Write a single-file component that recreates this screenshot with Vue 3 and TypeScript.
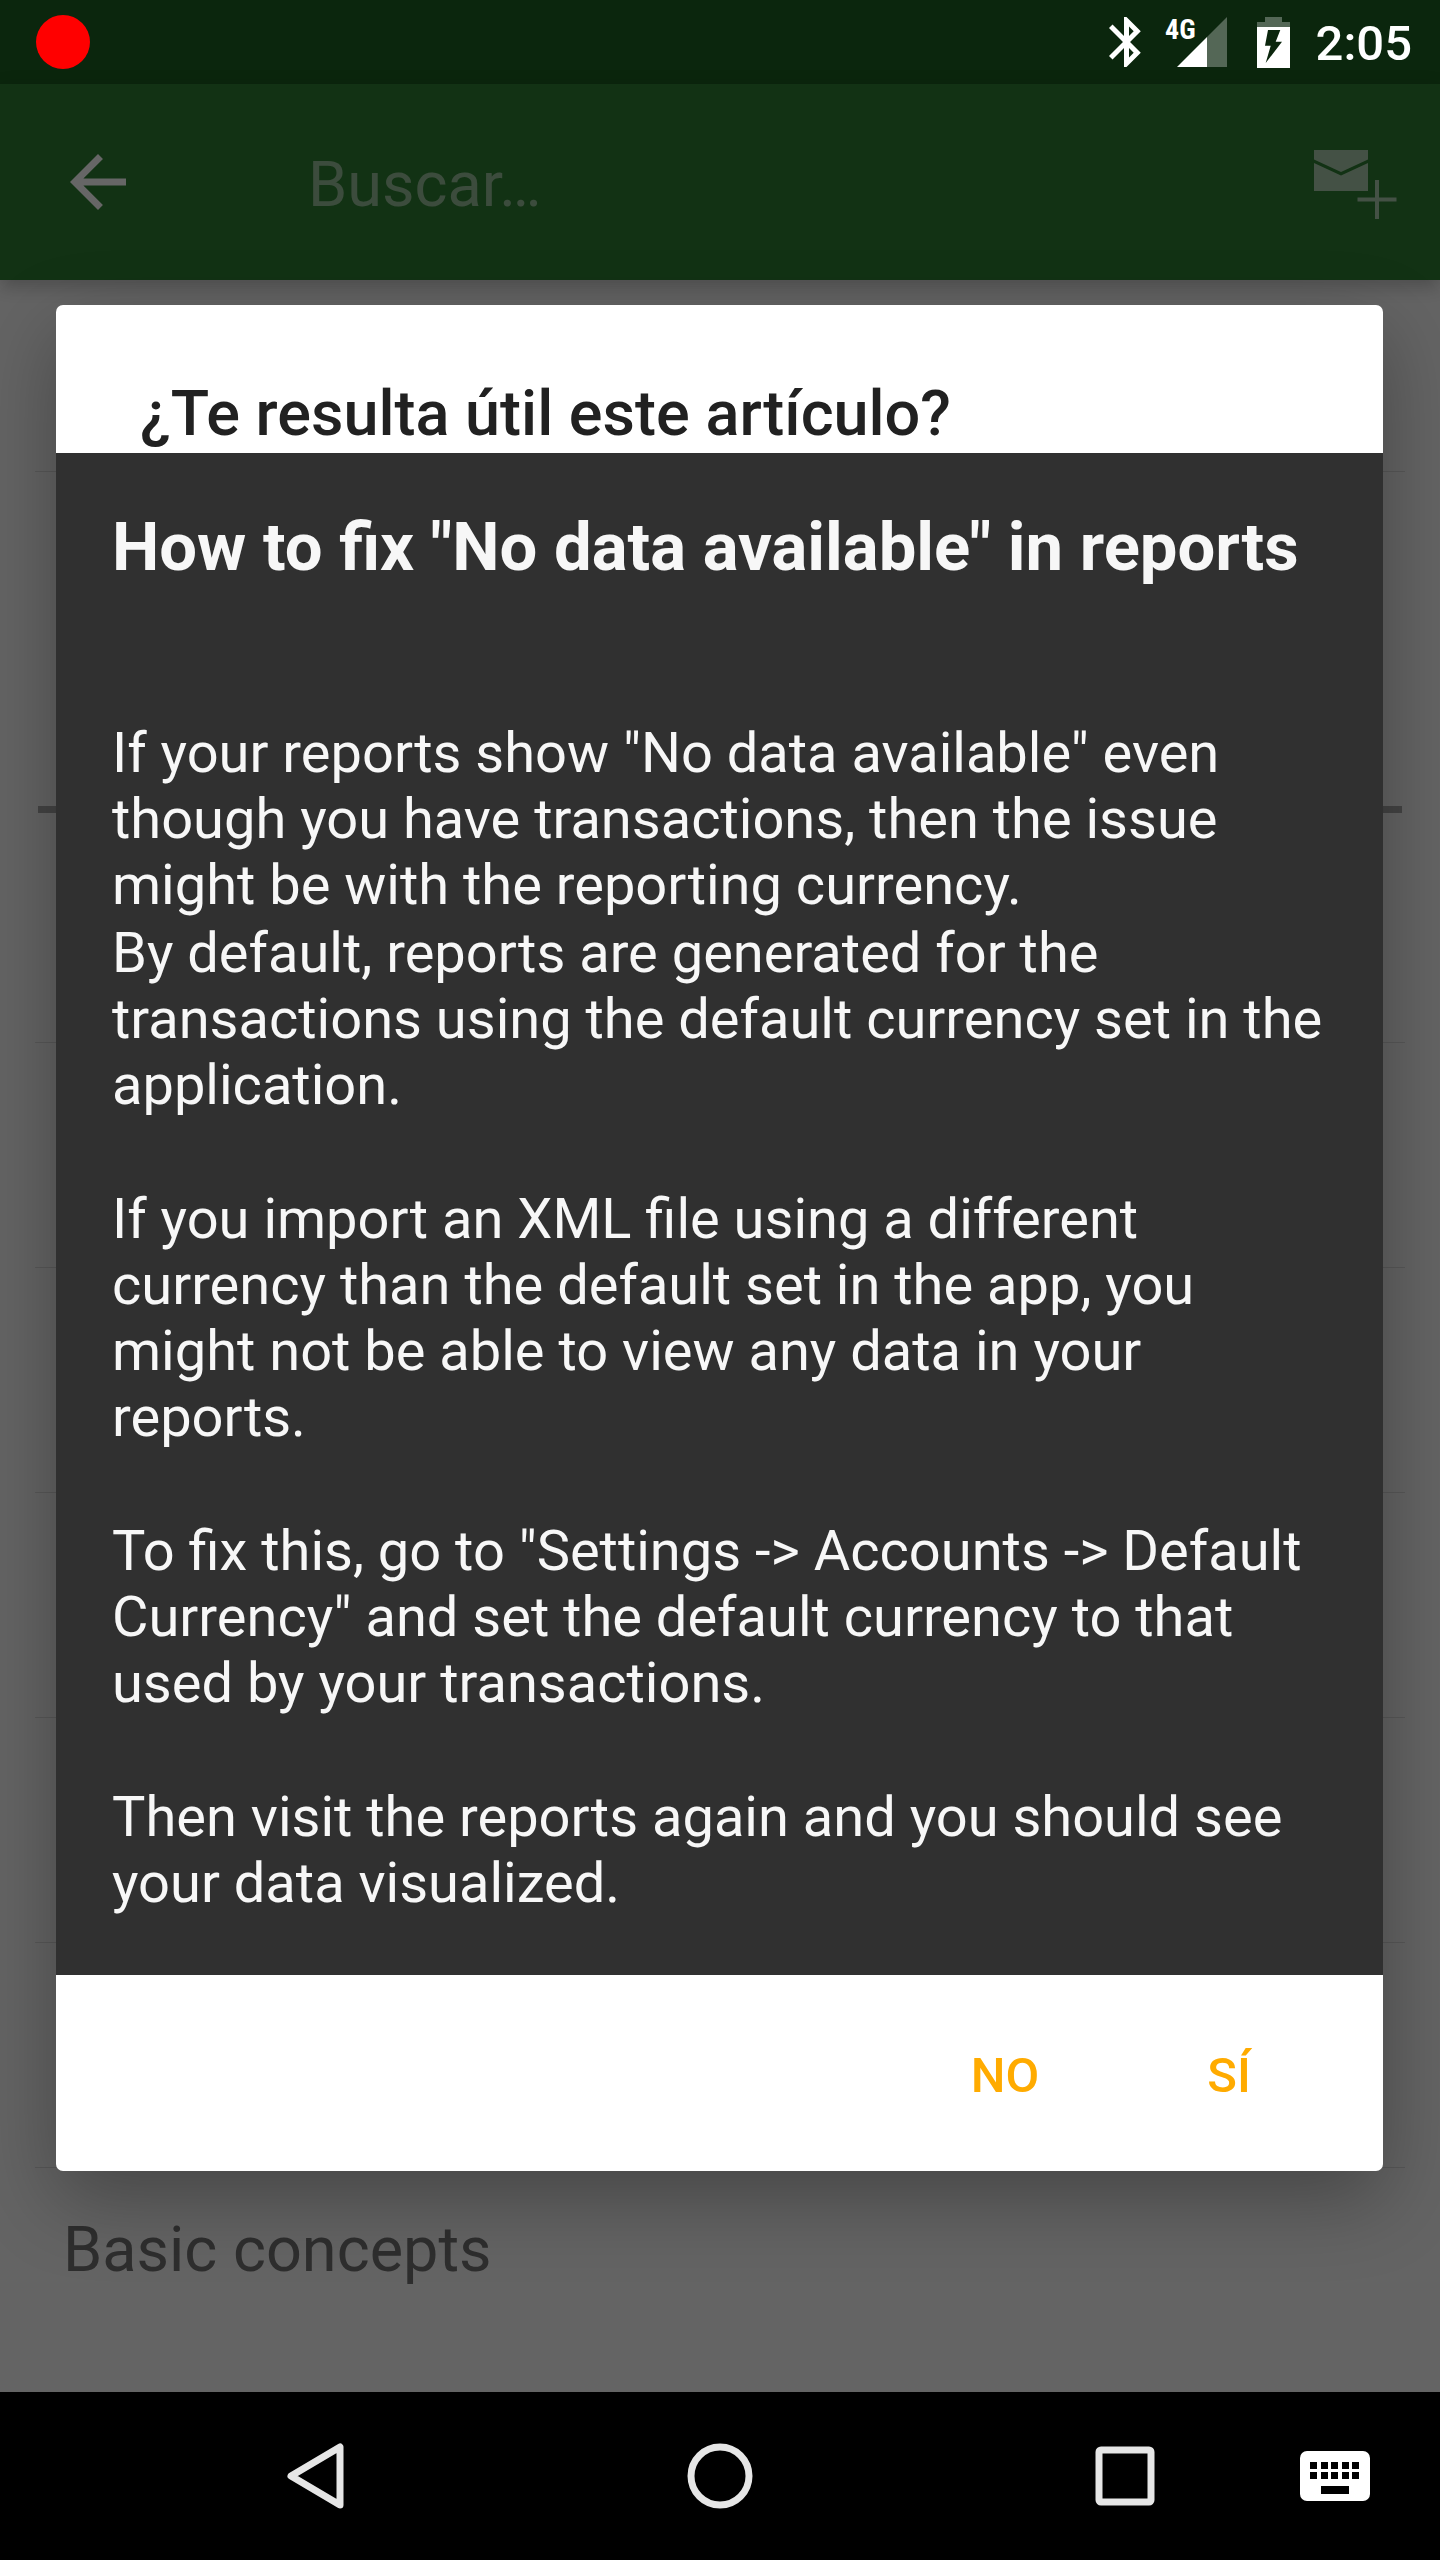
<script setup lang="ts">
import { ref } from 'vue'

const query = ref('')

const keyColumns: number[] = [10, 21, 31, 42, 52]
const keyRows: number[] = [11, 21]

const articles: string[] = ['', '', '', '', '', '', 'Basic concepts']
</script>

<template>
  <div class="screen">
    <header class="status">
      <span class="record" aria-label="Recording"></span>
      <div class="status-icons">
        <svg class="bluetooth" width="32" height="50" viewBox="5 2 12.8 20" aria-hidden="true">
          <path d="M17.71 7.71L12 2h-1v7.59L6.41 5 5 6.41 10.59 12 5 17.59 6.41 19 11 14.41V22h1l5.71-5.71-4.3-4.29 4.3-4.29zM13 5.83l1.88 1.88L13 9.59V5.83zm1.88 10.46L13 18.17v-3.76l1.88 1.88z" fill="#fff" />
        </svg>
        <svg class="signal" width="62" height="70" viewBox="0 -10 62 70" aria-hidden="true">
          <path d="M42 20L62 0V50H42z" fill="#fff" fill-opacity=".3" />
          <path d="M12 50L42 20V50z" fill="#fff" />
          <text class="network" x="0" y="22">4G</text>
        </svg>
        <svg class="battery" width="33" height="51" viewBox="0 0 33 51" aria-hidden="true">
          <path d="M8 0h17v5h8v5H0V5h8z" fill="#fff" fill-opacity=".3" />
          <path fill-rule="evenodd" d="M0 10H33V51H0zM11 13L8 28.7H13.7L8.7 46L25 24.7H18.7L23.3 13z" fill="#fff" />
        </svg>
        <time class="clock">2:05</time>
      </div>
    </header>

    <main class="app">
      <div class="toolbar">
        <button class="icon-button" type="button" aria-label="Atrás">
          <svg width="84" height="84" viewBox="0 0 24 24" aria-hidden="true">
            <path d="M20 11H7.83l5.59-5.59L12 4l-8 8 8 8 1.41-1.41L7.83 13H20v-2z" fill="#fff" />
          </svg>
        </button>
        <input v-model="query" class="search" type="text" placeholder="Buscar…" aria-label="Buscar" />
        <button class="icon-button" type="button" aria-label="Nuevo mensaje">
          <svg width="84" height="76" viewBox="0 -6 84 76" aria-hidden="true">
            <g fill="#abcbad">
              <path d="M0 0H54V9.5L27 22L0 9.5z" />
              <path d="M0 13L27 25.5L54 13V41H0z" />
              <path d="M61 30h4v17.500h17.500v4H65V69H61V51.500H43.500v-4H61z" />
            </g>
          </svg>
        </button>
      </div>

      <div class="list">
        <div class="list-intro"></div>
        <div class="list-section"><div class="section-rule"></div></div>
        <div v-for="(article, i) in articles" :key="i" class="row">{{ article }}</div>
      </div>

      <div class="scrim">
        <section class="dialog" role="dialog" aria-labelledby="dialog-title">
          <h1 id="dialog-title" class="dialog-title">¿Te resulta útil este artículo?</h1>
          <article class="content">
            <h2 class="content-title">How to fix "No data available" in reports</h2>
            <p>If your reports show "No data available" even though you have transactions, then the issue might be with the reporting currency.</p>
            <p class="continued">By default, reports are generated for the transactions using the default currency set in the application.</p>
            <p>If you import an XML file using a different currency than the default set in the app, you might not be able to view any data in your reports.</p>
            <p>To fix this, go to "Settings -&gt; Accounts -&gt; Default Currency" and set the default currency to that used by your transactions.</p>
            <p>Then visit the reports again and you should see your data visualized.</p>
          </article>
          <div class="actions">
            <button class="action" type="button">NO</button>
            <button class="action" type="button">SÍ</button>
          </div>
        </section>
      </div>
    </main>

    <nav class="navbar">
      <div class="nav-main">
        <button class="nav-button" type="button" aria-label="Atrás">
          <svg width="58" height="68" viewBox="0 0 58 68" aria-hidden="true">
            <path d="M5 34L54 5V63z" fill="none" stroke="#e6e6e6" stroke-width="7" stroke-linejoin="round" />
          </svg>
        </button>
        <button class="nav-button" type="button" aria-label="Inicio">
          <svg width="66" height="66" viewBox="0 0 66 66" aria-hidden="true">
            <circle cx="33" cy="33" r="29" fill="none" stroke="#e6e6e6" stroke-width="7" />
          </svg>
        </button>
        <button class="nav-button" type="button" aria-label="Recientes">
          <svg width="60" height="60" viewBox="0 0 60 60" aria-hidden="true">
            <rect x="4" y="4" width="52" height="52" rx="2" fill="none" stroke="#e6e6e6" stroke-width="7" />
          </svg>
        </button>
      </div>
      <button class="nav-button" type="button" aria-label="Teclado">
        <svg width="70" height="50" viewBox="0 0 70 50" aria-hidden="true">
          <rect width="70" height="50" rx="7" fill="#fff" />
          <template v-for="y in keyRows" :key="y">
            <rect v-for="x in keyColumns" :key="x" :x="x" :y="y" width="7" height="7" fill="#000" />
          </template>
          <rect x="21" y="35" width="28" height="8" fill="#000" />
        </svg>
      </button>
    </nav>
  </div>
</template>

<style>
body {
  margin: 0;
  background: #000;
}
</style>

<style scoped>
.screen {
  display: flex;
  flex-direction: column;
  min-height: 100vh;
  font-family: Roboto, "Noto Sans", sans-serif;
}

button {
  margin: 0;
  padding: 0;
  border: 0;
  background: none;
  font-family: inherit;
}

svg {
  display: block;
}

.status {
  display: flex;
  align-items: center;
  justify-content: space-between;
  box-sizing: border-box;
  height: 84px;
  padding: 0 28px 0 36px;
  background: #0b260d;
}

.record {
  width: 54px;
  height: 54px;
  border-radius: 50%;
  background: #f00;
}

.status-icons {
  display: flex;
  align-items: center;
}

.signal {
  margin-left: 24px;
}

.battery {
  margin-left: 30px;
}

.network {
  font-family: "Roboto Condensed", "Liberation Sans Narrow", Roboto, sans-serif;
  font-size: 28px;
  font-weight: 700;
  fill: #fff;
}

.clock {
  margin-left: 26px;
  padding-top: 4px;
  color: #fff;
  font-size: 49px;
  font-weight: 500;
  line-height: 58px;
}

.app {
  position: relative;
  display: flex;
  flex: 1;
  flex-direction: column;
  background: #fafafa;
}

.toolbar {
  position: relative;
  display: flex;
  align-items: center;
  box-sizing: border-box;
  height: 196px;
  padding: 0 42px 0 56px;
  background: #2e7d32;
  box-shadow: 0 6px 18px rgba(0, 0, 0, 0.24);
}

.search {
  flex: 1;
  min-width: 0;
  height: 80px;
  margin: 0 0 0 168px;
  padding: 4px 0 0;
  border: 0;
  outline: 0;
  background: none;
  color: #fff;
  font-family: inherit;
  font-size: 63px;
}

.search::placeholder {
  color: rgba(255, 255, 255, 0.5);
  opacity: 1;
}

.list {
  padding: 0 35px;
}

.list-intro {
  height: 191px;
  border-bottom: 1px solid rgba(0, 0, 0, 0.12);
}

.list-section {
  display: flex;
  align-items: flex-end;
  box-sizing: border-box;
  height: 346px;
  padding: 0 3px 5px;
}

.section-rule {
  flex: 1;
  height: 7px;
  background: #aaa;
}

.row {
  box-sizing: border-box;
  height: 225px;
  padding: 45px 28px 0;
  border-bottom: 1px solid rgba(0, 0, 0, 0.12);
  color: #737373;
  font-size: 63px;
  line-height: 74px;
}

.row:last-child {
  height: 224px;
  border-bottom: 0;
}

.scrim {
  position: absolute;
  inset: 0;
  display: flex;
  align-items: center;
  overflow: hidden;
  padding: 0 57px 0 56px;
  background: rgba(0, 0, 0, 0.6);
}

.dialog {
  flex: 1;
  min-width: 0;
  overflow: hidden;
  border-radius: 7px;
  background: #fff;
  box-shadow: 0 28px 80px rgba(0, 0, 0, 0.3);
}

.dialog-title {
  margin: 0;
  padding: 72px 84px 2px;
  color: #212121;
  font-size: 63px;
  font-weight: 500;
  line-height: 74px;
}

.content {
  padding: 56px 56px 59px;
  background: #303030;
  color: #f7f7f7;
  font-size: 56px;
  line-height: 66px;
}

.content-title {
  margin: 0 0 135px;
  font-size: 67px;
  font-weight: 700;
  line-height: 76px;
}

.content p {
  margin: 68px 0 0;
}

.content .continued {
  margin-top: 2px;
}

.actions {
  display: flex;
  align-items: center;
  justify-content: flex-end;
  height: 196px;
  padding-right: 42px;
}

.action {
  width: 224px;
  height: 168px;
  padding-top: 4px;
  color: #ffab00;
  font-size: 49px;
  font-weight: 500;
}

.navbar {
  display: flex;
  height: 168px;
  padding-left: 210px;
  background: #000;
}

.nav-main {
  display: flex;
  flex: 1;
  justify-content: space-between;
}

.nav-button {
  display: flex;
  align-items: center;
  justify-content: center;
  width: 210px;
  height: 168px;
}
</style>
